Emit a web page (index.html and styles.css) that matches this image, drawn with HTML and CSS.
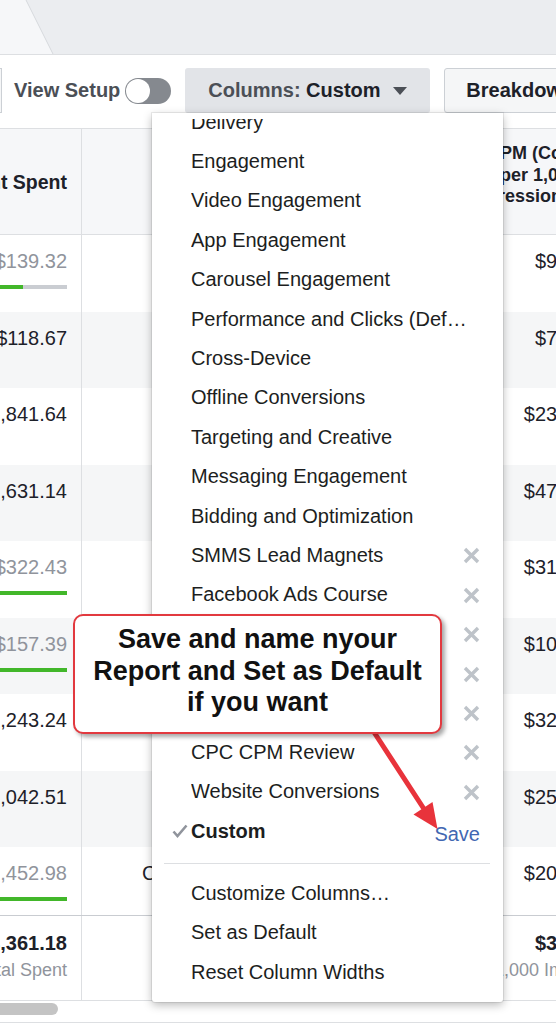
FILE: index.html
```html
<!DOCTYPE html>
<html>
<head>
<meta charset="utf-8">
<title>Columns: Custom</title>
<link rel="stylesheet" href="styles.css">
</head>
<body>
<div class="page">
  <div class="tabbar">
    <svg class="tab-shape" width="60" height="54" viewBox="0 0 60 54">
      <path d="M0 0 H26 L53 54 H0 Z" fill="#f6f7f9"/>
      <path d="M26 0 L53 54" stroke="#d6d9dd" stroke-width="1" fill="none"/>
    </svg>
  </div>

  <div class="toolbar">
    <div class="edge"></div>
    <span class="view-setup">View Setup</span>
    <span class="toggle"><span class="knob"></span></span>
    <div class="btn columns-btn">
      <span class="btn-text"><span class="muted">Columns:</span> Custom</span>
      <svg class="caret" width="14" height="8" viewBox="0 0 14 8"><path d="M0 0 H14 L7 8 Z" fill="#4b4f56"/></svg>
    </div>
    <div class="btn breakdown-btn">Breakdown</div>
  </div>

  <div class="table">
    <div class="row head">
      <div class="c1 hcell">Amount Spent</div>
      <div class="c2"></div>
      <div class="c3 hcell3">CPM (Cost<br>per 1,000<br>Impressions)</div>
    </div>

    <div class="row data">
      <div class="c1"><div class="val muted-val">$139.32</div><div class="bar"><span class="bar-fill" style="width:34%"></span></div></div>
      <div class="c2"></div>
      <div class="c3"><div class="val">$9.18</div></div>
    </div>
    <div class="row data alt">
      <div class="c1"><div class="val">$118.67</div></div>
      <div class="c2"></div>
      <div class="c3"><div class="val">$7.42</div></div>
    </div>
    <div class="row data">
      <div class="c1"><div class="val">$1,841.64</div></div>
      <div class="c2"></div>
      <div class="c3"><div class="val">$23.61</div></div>
    </div>
    <div class="row data alt">
      <div class="c1"><div class="val">$1,631.14</div></div>
      <div class="c2"></div>
      <div class="c3"><div class="val">$47.05</div></div>
    </div>
    <div class="row data">
      <div class="c1"><div class="val muted-val">$322.43</div><div class="bar"><span class="bar-fill" style="width:100%"></span></div></div>
      <div class="c2"></div>
      <div class="c3"><div class="val">$31.27</div></div>
    </div>
    <div class="row data alt">
      <div class="c1"><div class="val muted-val">$157.39</div><div class="bar"><span class="bar-fill" style="width:100%"></span></div></div>
      <div class="c2"></div>
      <div class="c3"><div class="val">$10.84</div></div>
    </div>
    <div class="row data">
      <div class="c1"><div class="val">$1,243.24</div></div>
      <div class="c2"></div>
      <div class="c3"><div class="val">$32.16</div></div>
    </div>
    <div class="row data alt">
      <div class="c1"><div class="val">$1,042.51</div></div>
      <div class="c2"></div>
      <div class="c3"><div class="val">$25.93</div></div>
    </div>
    <div class="row data last">
      <div class="c1"><div class="val muted-val">$1,452.98</div><div class="bar"><span class="bar-fill" style="width:100%"></span></div></div>
      <div class="c2"><div class="val status">Completed</div></div>
      <div class="c3"><div class="val">$20.39</div></div>
    </div>

    <div class="row total">
      <div class="c1"><div class="val strong">$13,361.18</div><div class="sub">Total Spent</div></div>
      <div class="c2"></div>
      <div class="c3"><div class="val strong">$3.07</div><div class="sub">Per 1,000 Impressions</div></div>
    </div>

    <div class="hscroll"><div class="thumb"></div></div>
  </div>

  <div class="menu">
    <div class="menu-scroll">
      <div class="mi"><span class="chk"></span><span class="txt">Delivery</span></div>
      <div class="mi"><span class="chk"></span><span class="txt">Engagement</span></div>
      <div class="mi"><span class="chk"></span><span class="txt">Video Engagement</span></div>
      <div class="mi"><span class="chk"></span><span class="txt">App Engagement</span></div>
      <div class="mi"><span class="chk"></span><span class="txt">Carousel Engagement</span></div>
      <div class="mi"><span class="chk"></span><span class="txt">Performance and Clicks (Def…</span></div>
      <div class="mi"><span class="chk"></span><span class="txt">Cross-Device</span></div>
      <div class="mi"><span class="chk"></span><span class="txt">Offline Conversions</span></div>
      <div class="mi"><span class="chk"></span><span class="txt">Targeting and Creative</span></div>
      <div class="mi"><span class="chk"></span><span class="txt">Messaging Engagement</span></div>
      <div class="mi"><span class="chk"></span><span class="txt">Bidding and Optimization</span></div>
      <div class="mi"><span class="chk"></span><span class="txt">SMMS Lead Magnets</span><svg class="x" width="17" height="17" viewBox="0 0 17 17"><path d="M2 2 L15 15 M15 2 L2 15"/></svg></div>
      <div class="mi"><span class="chk"></span><span class="txt">Facebook Ads Course</span><svg class="x" width="17" height="17" viewBox="0 0 17 17"><path d="M2 2 L15 15 M15 2 L2 15"/></svg></div>
      <div class="mi"><span class="chk"></span><span class="txt">Link Clicks Report</span><svg class="x" width="17" height="17" viewBox="0 0 17 17"><path d="M2 2 L15 15 M15 2 L2 15"/></svg></div>
      <div class="mi"><span class="chk"></span><span class="txt">Video Views Report</span><svg class="x" width="17" height="17" viewBox="0 0 17 17"><path d="M2 2 L15 15 M15 2 L2 15"/></svg></div>
      <div class="mi"><span class="chk"></span><span class="txt">Lead Ads Review</span><svg class="x" width="17" height="17" viewBox="0 0 17 17"><path d="M2 2 L15 15 M15 2 L2 15"/></svg></div>
      <div class="mi"><span class="chk"></span><span class="txt">CPC CPM Review</span><svg class="x" width="17" height="17" viewBox="0 0 17 17"><path d="M2 2 L15 15 M15 2 L2 15"/></svg></div>
      <div class="mi"><span class="chk"></span><span class="txt">Website Conversions</span><svg class="x" width="17" height="17" viewBox="0 0 17 17"><path d="M2 2 L15 15 M15 2 L2 15"/></svg></div>
      <div class="mi"><span class="chk"><svg width="16" height="14" viewBox="0 0 16 14"><path d="M1.5 7.5 L5.5 12 L14.5 1.5" fill="none" stroke="#90949c" stroke-width="2.6"/></svg></span><span class="txt bold">Custom</span><span class="save">Save</span></div>
    </div>
    <div class="sep"></div>
    <div class="mi foot"><span class="chk"></span><span class="txt">Customize Columns…</span></div>
    <div class="mi foot"><span class="chk"></span><span class="txt">Set as Default</span></div>
    <div class="mi foot"><span class="chk"></span><span class="txt">Reset Column Widths</span></div>
  </div>

  <svg class="arrow" width="90" height="115" viewBox="360 720 90 115">
    <path d="M370 726 L424 809" stroke="#e8333b" stroke-width="5" stroke-linecap="round" fill="none"/>
    <path d="M437.5 829 L413.5 814.5 L432.5 802 Z" fill="#e8333b"/>
  </svg>

  <div class="callout">Save and name nyour<br>Report and Set as Default<br>if you want</div>
</div>
</body>
</html>
```

FILE: styles.css
```css
* { box-sizing: border-box; }
html, body { margin: 0; padding: 0; }
body {
  width: 556px;
  height: 1024px;
  overflow: hidden;
  background: #fff;
  font-family: "Liberation Sans", Arial, sans-serif;
  color: #1d2129;
}
.page {
  position: relative;
  width: 556px;
  height: 1024px;
  overflow: hidden;
}

/* top tab strip */
.tabbar {
  height: 55px;
  background: #ebedf0;
  border-bottom: 1px solid #dddfe2;
}
.tab-shape { display: block; }

/* toolbar */
.toolbar {
  height: 74px;
  display: flex;
  align-items: center;
  padding-bottom: 2px;
  border-bottom: 1px solid #dddfe2;
  white-space: nowrap;
}
.edge {
  width: 2px;
  height: 45px;
  flex-shrink: 0;
  background: #f5f6f7;
  border: 1px solid #ccd0d5;
  border-left: none;
}
.view-setup {
  margin-left: 12px;
  font-size: 20px;
  font-weight: bold;
  color: #4b4f56;
}
.toggle {
  margin-left: 5px;
  width: 46px;
  height: 26px;
  flex-shrink: 0;
  border-radius: 13px;
  background: #85898f;
  padding: 1px;
  display: flex;
}
.knob {
  width: 24px;
  height: 24px;
  border-radius: 50%;
  background: #fff;
}
.btn {
  height: 45px;
  flex-shrink: 0;
  display: flex;
  align-items: center;
  border-radius: 3px;
  font-size: 20px;
  font-weight: bold;
}
.columns-btn {
  margin-left: 14px;
  width: 245px;
  padding-left: 23px;
  background: #e2e4e8;
  color: #1d2129;
}
.muted { color: #4b4f56; }
.caret { margin-left: 12px; }
.breakdown-btn {
  margin-left: 14px;
  width: 200px;
  padding-left: 21px;
  background: #f5f6f7;
  border: 1px solid #ccd0d5;
  color: #1d2129;
}

/* table */
.table { width: 600px; }
.row {
  display: grid;
  grid-template-columns: 82px 379px 139px;
  width: 600px;
}
.c1 {
  border-right: 1px solid #dddfe2;
  padding-right: 14px;
  display: flex;
  flex-direction: column;
  align-items: flex-end;
  white-space: nowrap;
}
.c3 {
  padding-right: 15px;
  text-align: right;
  white-space: nowrap;
}
.head {
  height: 106px;
  background: #f6f7f9;
  border-bottom: 1px solid #dddfe2;
}
.c1.hcell {
  flex-direction: row;
  align-items: center;
  justify-content: flex-end;
  font-size: 19.5px;
  line-height: 22px;
  font-weight: bold;
}
.c3.hcell3 {
  padding-top: 14px;
  padding-right: 22px;
  font-size: 18px;
  line-height: 21.5px;
  font-weight: bold;
}
.data { height: 76.5px; }
.data.last { height: 68px; }
.alt { background: #f5f6f7; }
.data .c1, .data .c3, .data .c2 { padding-top: 14px; }
.val {
  font-size: 20px;
  line-height: 24px;
}
.muted-val { color: #90949c; }
.status { padding-left: 60px; }
.bar {
  align-self: stretch;
  margin-top: 12px;
  height: 4px;
  background: #cacdd2;
  display: flex;
}
.bar-fill {
  display: block;
  height: 4px;
  background: #42b72a;
}
.total {
  height: 86px;
  border-top: 1px solid #c9ccd1;
  border-bottom: 1px solid #dddfe2;
}
.total .c1, .total .c3 { padding-top: 15px; }
.strong { font-weight: bold; }
.sub {
  margin-top: 4px;
  font-size: 18px;
  line-height: 22px;
  color: #90949c;
  white-space: nowrap;
}
.hscroll {
  width: 556px;
  height: 22px;
  padding-top: 2px;
  border-bottom: 1px solid #dddfe2;
}
.thumb {
  width: 58px;
  height: 12px;
  border-radius: 0 6px 6px 0;
  background: #c4c4c4;
}

/* dropdown menu */
.menu {
  position: absolute;
  left: 152px;
  top: 113px;
  width: 351px;
  height: 889px;
  padding-top: 6px;
  background: #fff;
  border-radius: 0 0 3px 3px;
  box-shadow: 0 0 0 1px rgba(0, 0, 0, 0.07), 0 3px 10px rgba(0, 0, 0, 0.28);
  z-index: 2;
}
.menu-scroll {
  height: 731.5px;
  overflow: hidden;
}
.menu-scroll .mi:first-child { margin-top: -17.1px; }
.mi {
  display: flex;
  align-items: center;
  height: 39.4px;
  padding-left: 20px;
  padding-right: 23px;
  font-size: 20px;
  color: #1c1e21;
  white-space: nowrap;
}
.mi.foot { height: 39.3px; }
.chk {
  width: 19px;
  flex-shrink: 0;
  display: flex;
  align-items: center;
}
.txt {
  flex: 1;
  line-height: 24px;
  overflow: hidden;
}
.bold { font-weight: bold; }
.x {
  flex-shrink: 0;
  margin-top: 2px;
}
.x path {
  stroke: #bec3c9;
  stroke-width: 3.4;
  fill: none;
}
.save {
  color: #4267b2;
  padding-top: 7px;
}
.sep {
  height: 1px;
  margin: 12px 13px 10px 12px;
  background: #dddfe2;
}

/* annotation */
.arrow {
  position: absolute;
  left: 360px;
  top: 720px;
  z-index: 3;
}
.callout {
  position: absolute;
  left: 73px;
  top: 614px;
  width: 369px;
  height: 120px;
  padding-top: 8px;
  background: #fff;
  border: 2.5px solid #e2393f;
  border-radius: 10px;
  box-shadow: 3px 3px 4px rgba(0, 0, 0, 0.35);
  font-size: 27px;
  line-height: 31.5px;
  font-weight: bold;
  color: #111;
  text-align: center;
  white-space: nowrap;
  z-index: 4;
}
```
